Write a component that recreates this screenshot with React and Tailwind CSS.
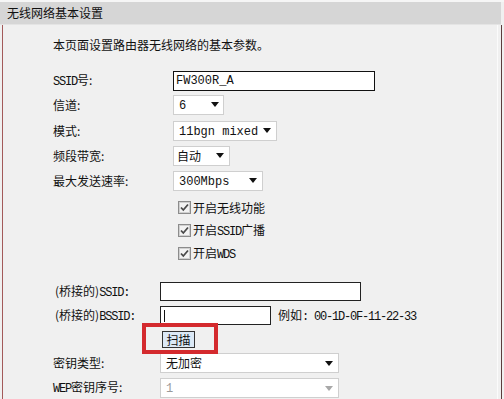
import React from "react";

const CJK = { fontFamily: '"Noto Sans CJK SC", "Liberation Sans", sans-serif' };

function A({ children }) {
  return (
    <span className="font-['Liberation_Mono',monospace] text-[12px] tracking-[-1.2px]">
      {children}
    </span>
  );
}
function C({ children }) {
  return <span className="font-['Liberation_Mono',monospace] text-[12px]">{children}</span>;
}

function Arrow({ gray }) {
  return (
    <svg width="8" height="5" viewBox="0 0 8 5" className="shrink-0">
      <path d="M0 0 L8 0 L4 5 Z" fill={gray ? "#a8a8a8" : "#111"} />
    </svg>
  );
}

function Select({ w, children, gray, pr = "pr-[5px]", pl = "pl-[5px]" }) {
  return (
    <div
      className={`h-[20px] bg-white border border-[#cfcfcf] flex items-center justify-between ${pl} ${pr} ${w} ${gray ? "text-[#9a9a9a]" : "text-[#111]"}`}
    >
      <span className="leading-[18px]">{children}</span>
      <Arrow gray={gray} />
    </div>
  );
}

function Check({ children }) {
  return (
    <div className="flex items-center h-[23px] ml-[5px]">
      <svg width="13" height="13" viewBox="0 0 13 13" className="shrink-0">
        <rect x="0.5" y="0.5" width="12" height="12" fill="#e6e6e6" stroke="#8c8c8c" />
        <rect x="1.5" y="1.5" width="10" height="10" fill="#f3f3f3" stroke="#d0d0d0" />
        <path d="M3 6.5 L5.3 9 L10 3.5" fill="none" stroke="#4a4a4a" strokeWidth="1.8" />
      </svg>
      <span className="ml-[2px] leading-[16px] text-[12px] text-[#111]">{children}</span>
    </div>
  );
}

export default function App() {
  return (
    <div
      className="w-[504px] h-[399px] bg-[#f0f0f0] overflow-hidden relative text-[12px] text-[#111]"
      style={CJK}
    >
      <div className="h-[2px] bg-[#f6f6f6]" />
      <div className="h-[23px] bg-[#d6d6d6] mr-[3px] flex items-center pl-[7px] border-b border-[#e4e4e4]">
        <span className="leading-[16px]">无线网络基本设置</span>
      </div>
      <div className="h-[374px] ml-[2px] mr-[2px] border-l border-[#a35a5a] border-r border-r-[#5c3d3d] relative">
        <div className="absolute right-[3px] top-0 bottom-0 w-px bg-[#fbfbfb]" />
        <div className="pl-[50px] pt-[12px]">
          <div className="leading-[16px]">本页面设置路由器无线网络的基本参数。</div>

          <div className="flex items-center mt-[18px] h-[20px]">
            <div className="w-[120px]">
              <A>SSID</A>号:
            </div>
            <div className="w-[202px] h-[20px] bg-white border border-[#111] flex items-center pl-[2px]">
              <C>FW300R_A</C>
            </div>
          </div>

          <div className="flex items-center mt-[3px] h-[21px]">
            <div className="w-[120px]">信道:</div>
            <Select w="w-[51px]" pr="pr-[4px]">
              <C>6</C>
            </Select>
          </div>

          <div className="flex items-center mt-[5px] h-[21px]">
            <div className="w-[120px]">模式:</div>
            <Select w="w-[104px]">
              <C>11bgn mixed</C>
            </Select>
          </div>

          <div className="flex items-center mt-[4px] h-[21px]">
            <div className="w-[120px]">频段带宽:</div>
            <Select w="w-[57px]" pl="pl-[3px]">
              自动
            </Select>
          </div>

          <div className="flex items-center mt-[4px] h-[21px]">
            <div className="w-[120px]">最大发送速率:</div>
            <Select w="w-[90px]">
              <C>300Mbps</C>
            </Select>
          </div>

          <div className="ml-[120px] mt-[5px]">
            <Check>开启无线功能</Check>
            <Check>
              开启<A>SSID</A>广播
            </Check>
            <Check>
              开启<A>WDS</A>
            </Check>
          </div>

          <div className="flex items-center mt-[17px] h-[19px]">
            <div className="w-[107px] pl-[2px]">
              (桥接的)<A>SSID:</A>
            </div>
            <div className="w-[201px] h-[19px] bg-white border border-[#222]" />
          </div>

          <div className="flex items-center mt-[5px] h-[19px]">
            <div className="w-[107px] pl-[2px]">
              (桥接的)<A>BSSID:</A>
            </div>
            <div className="w-[111px] h-[19px] bg-white border border-[#222] flex items-center pl-[3px]">
              <div className="w-px h-[12px] bg-[#111]" />
            </div>
            <div className="ml-[7px]">
              例如<A>: 00-1D-0F-11-22-33</A>
            </div>
          </div>

          <div className="ml-[109px] mt-[6px] h-[17px] w-[33px] bg-[#dce9f6] border border-[#333] flex items-center justify-center">
            <span className="leading-[14px]">扫描</span>
          </div>

          <div className="flex items-center mt-[5px] h-[20px]">
            <div className="w-[107px]">密钥类型:</div>
            <Select w="w-[179px]" pr="pr-[5px]">
              无加密
            </Select>
          </div>

          <div className="flex items-center mt-[5px] h-[20px]">
            <div className="w-[107px]">
              <A>WEP</A>密钥序号:
            </div>
            <Select w="w-[179px]" gray>
              <C>1</C>
            </Select>
          </div>
        </div>
      </div>
      <div className="absolute left-[142px] top-[323px] w-[76px] h-[31px] border-[4px] border-[#d42a2e]" />
    </div>
  );
}
